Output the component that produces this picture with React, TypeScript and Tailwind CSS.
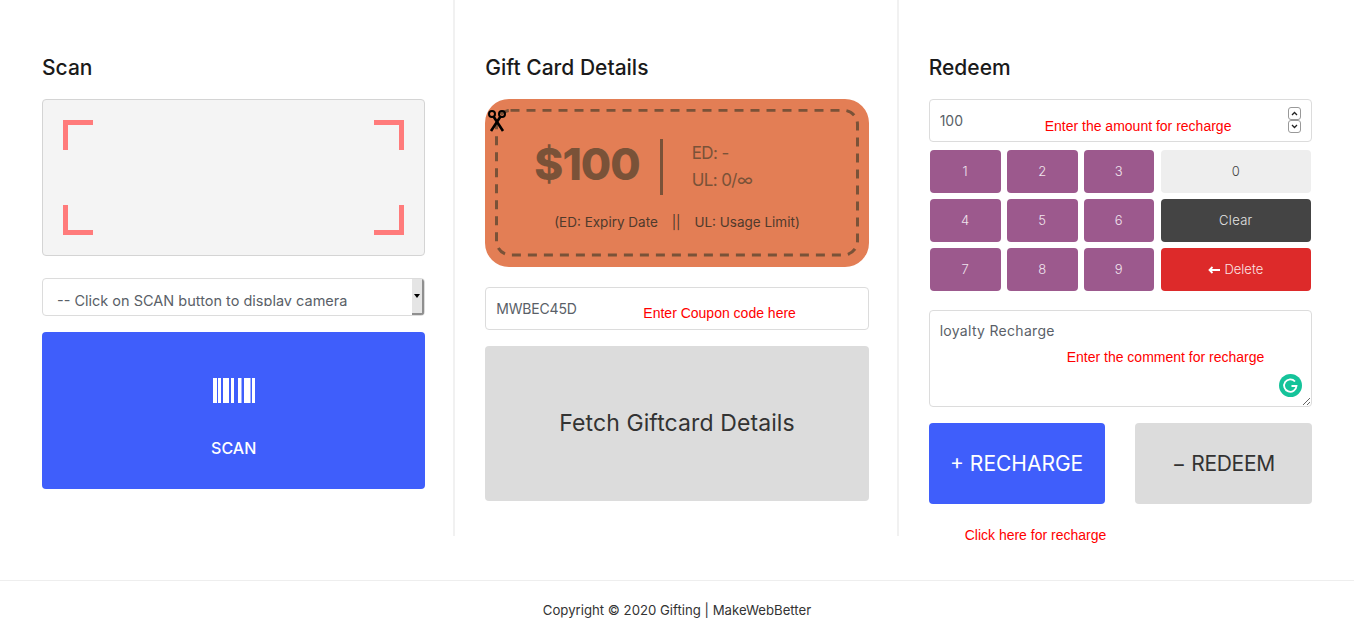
import React from "react";

const bars = [
  [0, 4],
  [5, 3],
  [10, 6],
  [18, 3],
  [25, 3.5],
  [31, 6.5],
  [39, 3],
];

const keys = ["1", "2", "3", "4", "5", "6", "7", "8", "9"];

function Corner({ className }: { className: string }) {
  return <span className={`absolute w-[30px] h-[30px] border-[#ff7b7b] ${className}`} />;
}

function Note({ className, children }: { className: string; children: React.ReactNode }) {
  return (
    <span className={`absolute text-[14px] leading-4 text-[#f00] whitespace-nowrap font-['Liberation_Sans',sans-serif] ${className}`}>
      {children}
    </span>
  );
}

function Scissors() {
  return (
    <svg className="absolute left-[2px] top-[11px]" width="20" height="22" viewBox="0 0 20 22">
      <circle cx="5" cy="4" r="3" fill="none" stroke="#000" strokeWidth="2" />
      <circle cx="15" cy="4" r="3" fill="none" stroke="#000" strokeWidth="2" />
      <path d="M6.5 6.5 L16 21 M13.5 6.5 L4 21" stroke="#000" strokeWidth="2.6" fill="none" />
    </svg>
  );
}

export default function App() {
  return (
    <div className="min-h-[640px] bg-white font-['Inter',sans-serif] text-[#333]">
      <div className="grid grid-cols-3 px-3">
        {/* Scan */}
        <section className="px-[30px] pt-[55px] pb-8 shadow-[inset_-2px_0_0_#f1f1f1]">
          <h2 className="text-[21px] leading-[26px] font-medium text-[#1a1a1a] mb-[18px]">Scan</h2>
          <div className="relative h-[157px] rounded bg-[#f4f4f4] border border-[#d4d4d4]">
            <Corner className="left-5 top-5 border-l-[5px] border-t-[5px]" />
            <Corner className="right-5 top-5 border-r-[5px] border-t-[5px]" />
            <Corner className="left-5 bottom-5 border-l-[5px] border-b-[5px]" />
            <Corner className="right-5 bottom-5 border-r-[5px] border-b-[5px]" />
          </div>
          <div className="relative mt-[22px] h-[38px] rounded border border-[#dcdcdc] overflow-hidden">
            <div className="h-[18px] mt-[9px] pl-[14px] text-[14.5px] leading-[26px] text-[#5a5f68] overflow-hidden whitespace-nowrap">
              -- Click on SCAN button to display camera
            </div>
            <div className="absolute right-0 top-0 bottom-0 w-[12px] bg-[#e5e5e5] border-r-2 border-b-2 border-[#8f8f8f] flex items-center justify-center">
              <span className="border-x-[3px] border-x-transparent border-t-[4px] border-t-black" />
            </div>
          </div>
          <button className="mt-4 w-full h-[157px] rounded bg-[#3f5efb] text-white flex flex-col items-center">
            <svg className="mt-[46px] ml-px" width="42" height="25" viewBox="0 0 42 25">
              {bars.map(([x, w]) => (
                <rect key={x} x={x} y="0" width={w} height="25" fill="#fff" />
              ))}
            </svg>
            <span className="mt-[35px] text-[16px] leading-5 font-medium">SCAN</span>
          </button>
        </section>

        {/* Gift card */}
        <section className="px-[30px] pt-[55px] pb-8 shadow-[inset_-2px_0_0_#f1f1f1]">
          <h2 className="text-[21px] leading-[26px] font-medium text-[#1a1a1a] mb-[18px]">Gift Card Details</h2>
          <div className="relative h-[168px] rounded-[24px] bg-[#e37e55] p-[11px]">
            <div className="h-full flex flex-col items-center">
              <div className="flex items-center mt-[29px] h-[56px] w-full pl-[38px]">
                <span className="-mt-[6px] text-[44px] leading-none font-extrabold text-[#7a5238] tracking-[-1px]">$100</span>
                <span className="ml-5 w-[3px] h-[56px] bg-[#7a5238]" />
                <div className="ml-[29px] text-[17px] leading-[27px] text-[#7a5238] tracking-[-0.6px]">
                  <div>ED: -</div>
                  <div>UL: 0/∞</div>
                </div>
              </div>
              <div className="mt-[17px] text-[13.5px] leading-5 text-[#4f3a2c] whitespace-nowrap">
                (ED: Expiry Date <span className="mx-[10px]">||</span> UL: Usage Limit)
              </div>
            </div>
            <svg className="absolute left-[10px] top-[10px]" width="365" height="148" viewBox="0 0 365 148">
              <rect x="1.5" y="1.3" width="361" height="144.7" rx="14" fill="none" stroke="#7a5238" strokeWidth="3" strokeDasharray="9 7" />
            </svg>
            <Scissors />
          </div>
          <div className="relative mt-5">
            <input
              readOnly
              value="MWBEC45D"
              className="w-full h-[43px] rounded border border-[#dcdcdc] px-[10px] text-[14px] tracking-[-0.2px] text-[#5a5f68] outline-none"
            />
            <Note className="left-[158px] top-[18px]">Enter Coupon code here</Note>
          </div>
          <button className="mt-4 w-full h-[155px] rounded bg-[#dcdcdc] text-[23px] tracking-[0.1px] text-[#333]">
            Fetch Giftcard Details
          </button>
        </section>

        {/* Redeem */}
        <section className="relative px-[30px] pt-[55px] pb-8">
          <h2 className="text-[21px] leading-[26px] font-medium text-[#1a1a1a] mb-[18px]">Redeem</h2>
          <div className="relative">
            <input
              readOnly
              value="100"
              className="w-full h-[43px] rounded border border-[#dcdcdc] px-[10px] text-[14px] text-[#5a5f68] outline-none"
            />
            <Note className="left-[116px] top-[19px]">Enter the amount for recharge</Note>
            <div className="absolute right-[11px] top-2 w-[13px] flex flex-col">
              <span className="h-[13px] rounded-[3px] border border-[#999] flex items-center justify-center">
                <svg width="7" height="5" viewBox="0 0 7 5"><path d="M1 4 L3.5 1.5 L6 4" fill="none" stroke="#222" strokeWidth="1.3" /></svg>
              </span>
              <span className="h-[13px] rounded-[3px] border border-[#999] flex items-center justify-center">
                <svg width="7" height="5" viewBox="0 0 7 5"><path d="M1 1 L3.5 3.5 L6 1" fill="none" stroke="#222" strokeWidth="1.3" /></svg>
              </span>
            </div>
          </div>
          <div className="mt-2 mx-px grid grid-cols-[71px_71px_70px_1fr] auto-rows-[43px] gap-[6px] text-[13px] font-light">
            {keys.slice(0, 3).map((k) => (
              <button key={k} className="rounded bg-[#9c598d] text-[#f0e4ee]">{k}</button>
            ))}
            <button className="ml-px rounded bg-[#eeeeee] text-[#444]">0</button>
            {keys.slice(3, 6).map((k) => (
              <button key={k} className="rounded bg-[#9c598d] text-[#f0e4ee]">{k}</button>
            ))}
            <button className="ml-px rounded bg-[#444444] text-[#e4e4e4] tracking-[0.3px]">Clear</button>
            {keys.slice(6).map((k) => (
              <button key={k} className="rounded bg-[#9c598d] text-[#f0e4ee]">{k}</button>
            ))}
            <button className="ml-px rounded bg-[#dd2a2a] text-[#fbe3e3] flex items-center justify-center gap-1">
              <svg width="12" height="8" viewBox="0 0 12 8">
                <path d="M12 4 H2 M4.5 1 L1.5 4 L4.5 7" fill="none" stroke="#fff" strokeWidth="1.8" />
              </svg>
              Delete
            </button>
          </div>
          <div className="relative mt-[19px] h-[97px]">
            <textarea
              readOnly
              value="loyalty Recharge"
              className="block w-full h-[97px] rounded border border-[#dcdcdc] px-[10px] py-[9px] text-[14px] leading-[21px] tracking-[0.3px] text-[#5a5f68] outline-none"
            />
            <Note className="left-[138px] top-[39px]">Enter the comment for recharge</Note>
            <svg className="absolute right-[10px] bottom-[10px]" width="23" height="23" viewBox="0 0 23 23">
              <circle cx="11.5" cy="11.5" r="11.5" fill="#15c39a" />
              <path d="M16 7.5 A6.2 6.2 0 1 0 17.5 12 H12.5" fill="none" stroke="#fff" strokeWidth="1.8" />
            </svg>
          </div>
          <div className="mt-4 flex justify-between">
            <button className="w-[176px] h-[81px] rounded bg-[#3f5efb] text-[21px] text-white">+ RECHARGE</button>
            <button className="w-[177px] h-[81px] rounded bg-[#dcdcdc] text-[21px] tracking-[-0.3px] text-[#333]">− REDEEM</button>
          </div>
          <Note className="left-[66px] top-[527px]">Click here for recharge</Note>
        </section>
      </div>

      <footer className="mt-11 h-[60px] border-t border-[#eeeeee] flex items-center justify-center text-[13.2px] text-[#333]">
        Copyright © 2020 Gifting | MakeWebBetter
      </footer>
    </div>
  );
}
